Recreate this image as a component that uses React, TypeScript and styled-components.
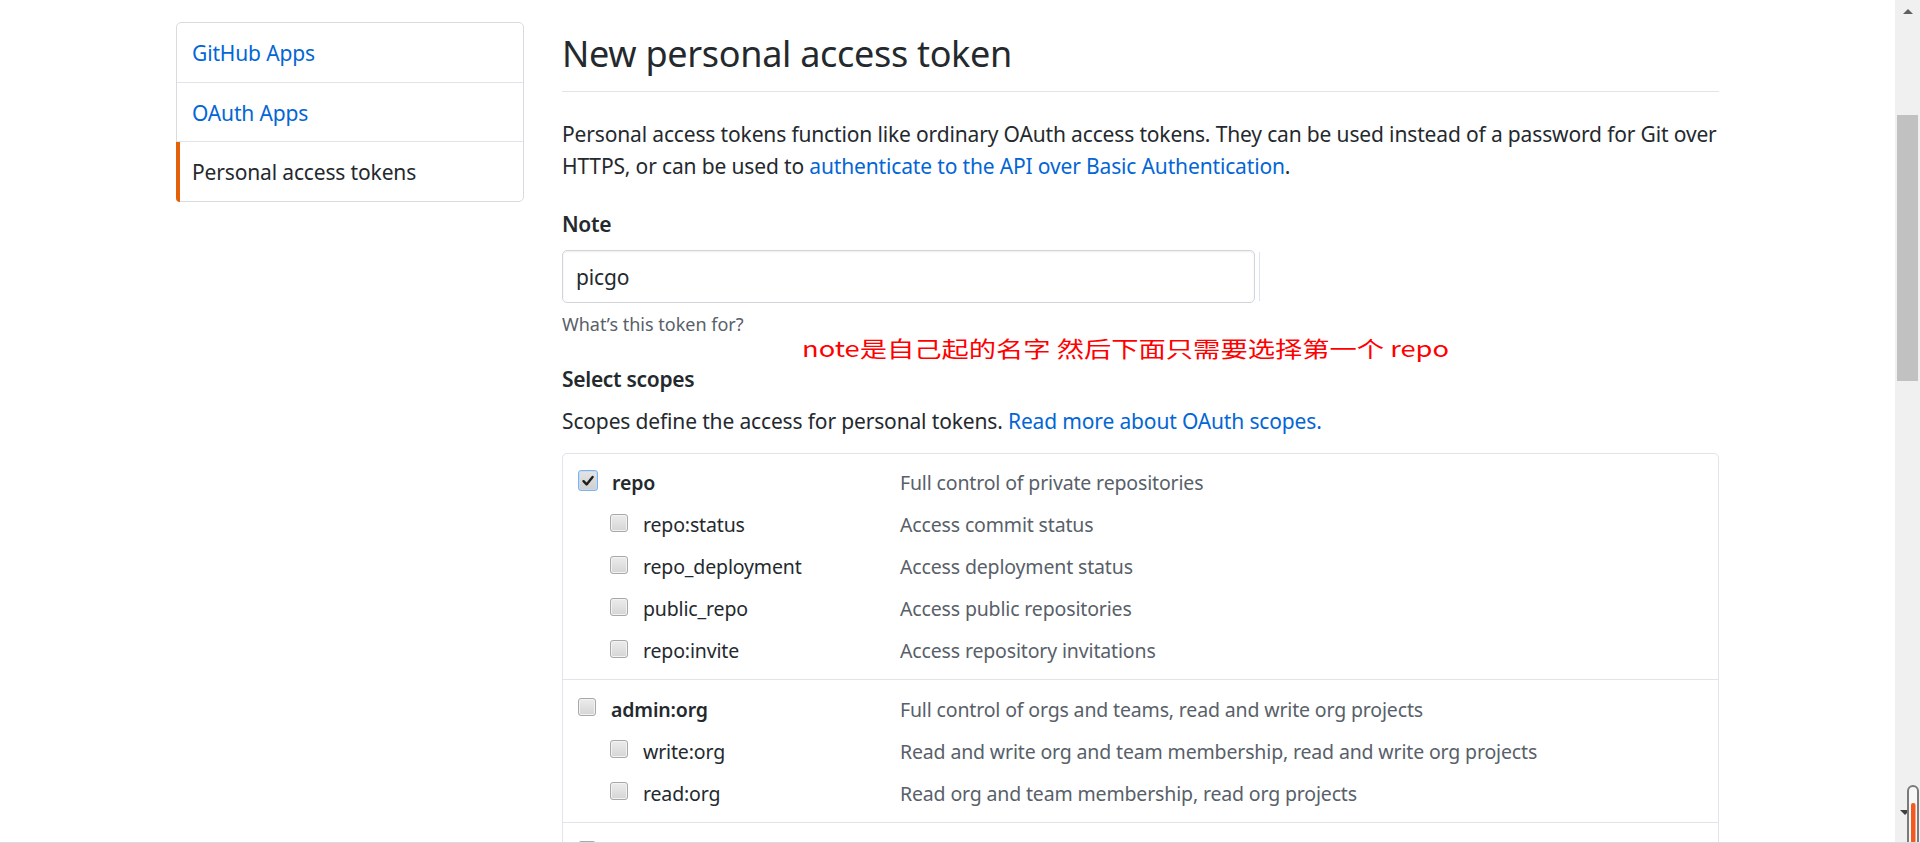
import React from "react";
import styled, { createGlobalStyle, css } from "styled-components";

const GlobalStyle = createGlobalStyle`
  html, body { margin: 0; padding: 0; height: 100%; overflow: hidden; background: #fff; }
  body {
    font-family: "Noto Sans", "Noto Sans CJK SC", sans-serif;
    color: #24292e;
  }
  *, *::before, *::after { box-sizing: border-box; }
`;

const Frame = styled.div`
  display: flex;
  height: 843px;
  border-bottom: 1px solid #dadada;
  overflow: hidden;
`;

const Viewport = styled.div`
  flex: 1;
  min-width: 0;
  overflow: hidden;
  background: #fff;
`;

const Layout = styled.div`
  display: flex;
  align-items: flex-start;
  gap: 38px;
  padding: 22px 0 0 176px;
`;

const SideMenu = styled.nav`
  width: 348px;
  flex: none;
  display: flex;
  flex-direction: column;
  border: 1px solid #d8dbdf;
  border-radius: 5px;
  background: #fff;
`;

const MenuItem = styled.a<{ $selected?: boolean }>`
  position: relative;
  display: block;
  padding: 15px 15px 12px;
  font-size: 21px;
  line-height: 31.5px;
  letter-spacing: -0.15px;
  color: ${(p) => (p.$selected ? "#24292e" : "#0366d6")};
  text-decoration: none;
  border-bottom: 1px solid #e1e4e8;
  &:last-child {
    border-bottom: 0;
  }
  ${(p) =>
    p.$selected &&
    css`
      &::before {
        content: "";
        position: absolute;
        left: -1px;
        top: 0;
        bottom: -1px;
        width: 4px;
        background: #e36209;
        border-bottom-left-radius: 5px;
      }
    `}
`;

const Main = styled.main`
  width: 1157px;
  flex: none;
  position: relative;
`;

const Subhead = styled.div`
  padding-top: 4.5px;
  padding-bottom: 10.5px;
  border-bottom: 1px solid #e1e4e8;
`;

const Heading = styled.h2`
  margin: 0;
  font-size: 36px;
  line-height: 54px;
  font-weight: 400;
  letter-spacing: -0.3px;
  color: #24292e;
`;

const Paragraph = styled.p<{ $gap: number }>`
  margin: ${(p) => p.$gap}px 0 0;
  font-size: 21px;
  line-height: 31.5px;
  letter-spacing: -0.15px;
  color: #24292e;
`;

const Link = styled.a`
  color: #0366d6;
  text-decoration: none;
`;

const FieldLabel = styled.div<{ $gap: number }>`
  margin-top: ${(p) => p.$gap}px;
  font-size: 21px;
  line-height: 31.5px;
  font-weight: 600;
  letter-spacing: -0.3px;
  color: #24292e;
`;

const InputRow = styled.div`
  margin-top: 9.5px;
  display: flex;
  align-items: center;
`;

const TextInput = styled.div`
  width: 693px;
  height: 53px;
  display: flex;
  align-items: center;
  padding: 0 13px;
  font-size: 21px;
  letter-spacing: -0.15px;
  color: #24292e;
  background: #fff;
  border: 1px solid #d1d5da;
  border-radius: 5px;
  box-shadow: inset 0 1px 2px rgba(27, 31, 35, 0.075);
`;

const FocusTrace = styled.span`
  width: 1px;
  height: 49px;
  margin-left: 4px;
  background: #d6e6f4;
`;

const NoteText = styled.div`
  margin-top: 8px;
  font-size: 18px;
  line-height: 27px;
  letter-spacing: 0;
  color: #586069;
`;

const Annotation = styled.div`
  position: absolute;
  left: 240px;
  top: 313.5px;
  font-family: "Noto Sans CJK SC", sans-serif;
  font-size: 22px;
  line-height: 22px;
  color: #ff0000;
  white-space: nowrap;
  transform: scaleX(1.24);
  transform-origin: left top;
`;

const ScopeBox = styled.div`
  margin-top: 15px;
  border: 1px solid #e1e4e8;
  border-radius: 5px;
`;

const ScopeGroup = styled.div`
  padding: 7.5px 0 8px;
  border-bottom: 1px solid #e1e4e8;
  &:last-child {
    border-bottom: 0;
  }
`;

const ScopeRow = styled.div`
  display: grid;
  grid-template-columns: 322px 1fr;
  align-items: center;
  height: 42px;
  padding-left: 15px;
  padding-top: 2px;
  font-size: 19.5px;
  line-height: 30px;
  letter-spacing: -0.15px;
`;

const ScopeName = styled.label<{ $child?: boolean }>`
  display: flex;
  align-items: center;
  padding-left: ${(p) => (p.$child ? 32 : 0)}px;
  font-weight: ${(p) => (p.$child ? 400 : 600)};
  color: #24292e;
`;

const ScopeDesc = styled.span`
  color: #586069;
`;

const Box = styled.span<{ $checked?: boolean }>`
  flex: none;
  display: inline-flex;
  align-items: center;
  justify-content: center;
  margin-bottom: 5px;
  border-radius: 3px;
  ${(p) =>
    p.$checked
      ? css`
          width: 20px;
          height: 21px;
          margin-right: 14px;
          border: 1.5px solid #7fb2e8;
          background: linear-gradient(#e4e4e4, #cfcfcf);
          box-shadow: inset 0 0 0 1px #c6dbf2;
        `
      : css`
          width: 18px;
          height: 18px;
          margin-right: 15px;
          border: 1px solid #a8a8a8;
          background: linear-gradient(#ececec, #d5d5d5);
          box-shadow: inset 0 0 0 1px #f3f3f3;
        `}
`;

const Checkbox = ({ checked }: { checked?: boolean }) => (
  <Box $checked={checked}>
    {checked && (
      <svg width="14" height="14" viewBox="0 0 14 14">
        <path d="M2.5 7.2 L5.6 10.4 L11.6 3" fill="none" stroke="#1d1d1d" strokeWidth="2.4" strokeLinecap="round" strokeLinejoin="round" />
      </svg>
    )}
  </Box>
);

const ScrollTrack = styled.div`
  position: relative;
  width: 25px;
  flex: none;
  display: flex;
  flex-direction: column;
  align-items: center;
  background: #f0f0f0;
`;

const ArrowUp = styled.span`
  margin-top: 9px;
  width: 0;
  height: 0;
  border-left: 5.5px solid transparent;
  border-right: 5.5px solid transparent;
  border-bottom: 5px solid #606060;
`;

const ArrowDown = styled.span`
  margin-top: auto;
  margin-bottom: 27px;
  margin-left: -5px;
  width: 0;
  height: 0;
  border-left: 5.5px solid transparent;
  border-right: 5.5px solid transparent;
  border-top: 5px solid #404040;
`;

const Thumb = styled.div`
  margin-top: 100.5px;
  width: 21px;
  height: 266px;
  background: #c1c1c1;
`;

const Gauge = styled.svg`
  position: absolute;
  right: 0;
  bottom: 0;
`;

type Scope = { name: string; desc: string; checked?: boolean; children: { name: string; desc: string }[] };

const scopes: Scope[] = [
  {
    name: "repo",
    desc: "Full control of private repositories",
    checked: true,
    children: [
      { name: "repo:status", desc: "Access commit status" },
      { name: "repo_deployment", desc: "Access deployment status" },
      { name: "public_repo", desc: "Access public repositories" },
      { name: "repo:invite", desc: "Access repository invitations" },
    ],
  },
  {
    name: "admin:org",
    desc: "Full control of orgs and teams, read and write org projects",
    children: [
      { name: "write:org", desc: "Read and write org and team membership, read and write org projects" },
      { name: "read:org", desc: "Read org and team membership, read org projects" },
    ],
  },
  {
    name: "admin:public_key",
    desc: "Full control of user public keys",
    children: [
      { name: "write:public_key", desc: "Write user public keys" },
      { name: "read:public_key", desc: "Read user public keys" },
    ],
  },
];

export default function App() {
  return (
    <>
      <GlobalStyle />
      <Frame>
        <Viewport>
          <Layout>
            <SideMenu>
              <MenuItem href="#">GitHub Apps</MenuItem>
              <MenuItem href="#">OAuth Apps</MenuItem>
              <MenuItem href="#" $selected>
                Personal access tokens
              </MenuItem>
            </SideMenu>
            <Main>
              <Subhead>
                <Heading>New personal access token</Heading>
              </Subhead>
              <Paragraph $gap={27}>
                Personal access tokens function like ordinary OAuth access tokens. They can be used instead of a password for Git over
                HTTPS, or can be used to <Link href="#">authenticate to the API over Basic Authentication</Link>.
              </Paragraph>
              <FieldLabel $gap={27}>Note</FieldLabel>
              <InputRow>
                <TextInput>picgo</TextInput>
                <FocusTrace />
              </InputRow>
              <NoteText>What’s this token for?</NoteText>
              <Annotation>note是自己起的名字 然后下面只需要选择第一个 repo</Annotation>
              <FieldLabel $gap={25.5}>Select scopes</FieldLabel>
              <Paragraph $gap={11.3}>
                Scopes define the access for personal tokens. <Link href="#">Read more about OAuth scopes.</Link>
              </Paragraph>
              <ScopeBox>
                {scopes.map((s) => (
                  <ScopeGroup key={s.name}>
                    <ScopeRow>
                      <ScopeName>
                        <Checkbox checked={s.checked} />
                        {s.name}
                      </ScopeName>
                      <ScopeDesc>{s.desc}</ScopeDesc>
                    </ScopeRow>
                    {s.children.map((c) => (
                      <ScopeRow key={c.name}>
                        <ScopeName $child>
                          <Checkbox />
                          {c.name}
                        </ScopeName>
                        <ScopeDesc>{c.desc}</ScopeDesc>
                      </ScopeRow>
                    ))}
                  </ScopeGroup>
                ))}
              </ScopeBox>
            </Main>
          </Layout>
        </Viewport>
        <ScrollTrack>
          <ArrowUp />
          <Thumb />
          <ArrowDown />
          <Gauge width="14" height="58" viewBox="0 0 14 58">
            <path d="M2 58 V7 A5 5 0 0 1 12 7 V58" fill="#f7f7f7" stroke="#7a7a7a" strokeWidth="2" />
            <rect x="5" y="19" width="4.5" height="40" rx="2" fill="#f25a1f" />
          </Gauge>
        </ScrollTrack>
      </Frame>
    </>
  );
}
